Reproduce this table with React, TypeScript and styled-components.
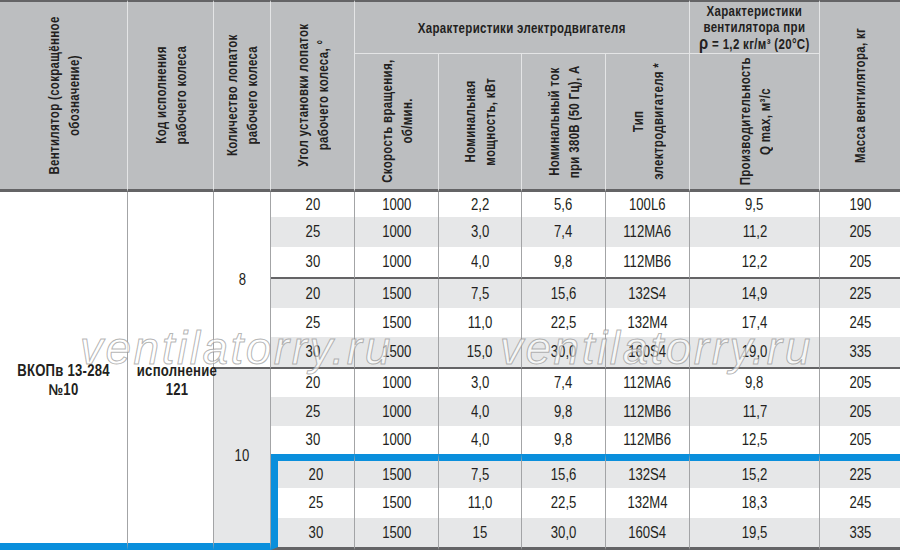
import React from 'react';
import styled, { createGlobalStyle } from 'styled-components';

const GlobalStyle = createGlobalStyle`
  html, body {
    margin: 0;
    padding: 0;
    background: #fff;
  }
`;

// Arial-metric face squeezed to 82% gives the widths of Arial Narrow
const FONT = `"Liberation Sans", Arial, sans-serif`;
const SQUEEZE = 0.82;
const DARK = '#646466';
const BLUE = '#0a8fdc';
const GRID = '#a3a4a6';
const HEAD_LINE = '#e4e5e6';

const Wrap = styled.div`
  position: relative;
  width: 900px;
  height: 550px;
  overflow: hidden;
  font-family: ${FONT};
  color: #231f20;
`;

const Table = styled.table`
  width: 900px;
  table-layout: fixed;
  border-collapse: separate;
  border-spacing: 0;
`;

const HeadCell = styled.th<{ $top?: boolean; $bottom?: 'dark' | 'light'; $last?: boolean }>`
  background: #bcbec0;
  padding: 0;
  font-weight: bold;
  text-align: center;
  vertical-align: middle;
  overflow: hidden;
  border-right: ${p => (p.$last ? 'none' : `1px solid ${HEAD_LINE}`)};
  border-top: ${p => (p.$top ? `2px solid ${DARK}` : 'none')};
  border-bottom: ${p =>
    p.$bottom === 'dark' ? `3px solid ${DARK}` : p.$bottom === 'light' ? `1px solid ${HEAD_LINE}` : 'none'};
`;

const VBox = styled.div<{ $h: number }>`
  height: ${p => p.$h}px;
  display: flex;
  align-items: center;
  justify-content: center;
`;

const VLabel = styled.span`
  flex-shrink: 0;
  writing-mode: vertical-rl;
  transform: rotate(180deg) scaleY(${SQUEEZE});
  font-size: 14px;
  line-height: 20px;
  letter-spacing: 0.4px;
  text-align: center;
  white-space: nowrap;
`;

const GroupBox = styled.div`
  display: flex;
  justify-content: center;
`;

const GroupLabel = styled.span`
  flex-shrink: 0;
  transform: scaleX(${SQUEEZE});
  font-size: 14px;
  line-height: 16px;
  letter-spacing: 0.4px;
  white-space: nowrap;
`;

const Rho = styled.span`
  font-size: 18px;
`;

const BodyRow = styled.tr<{ $h: number }>`
  height: ${p => p.$h}px;
`;

const Cell = styled.td<{
  $gray?: boolean;
  $bottom?: 'dark' | 'blue';
  $blueTop?: boolean;
  $blueLeft?: boolean;
  $last?: boolean;
}>`
  padding: 0;
  text-align: center;
  vertical-align: middle;
  font-size: 16px;
  line-height: 18px;
  white-space: nowrap;
  background: ${p => (p.$gray ? '#e6e7e8' : '#fff')};
  border-right: ${p => (p.$last ? 'none' : `1px solid ${GRID}`)};
  border-left: ${p => (p.$blueLeft ? `7px solid ${BLUE}` : 'none')};
  border-top: ${p => (p.$blueTop ? `7px solid ${BLUE}` : 'none')};
  border-bottom: ${p =>
    p.$bottom === 'dark' ? `2px solid ${DARK}` : p.$bottom === 'blue' ? `7px solid ${BLUE}` : 'none'};
`;

const ModelCell = styled(Cell)`
  font-weight: bold;
  line-height: 19px;
  padding-top: 24px;
  letter-spacing: 0.3px;
`;

const Narrow = styled.span`
  display: inline-block;
  transform: scaleX(${SQUEEZE});
`;

const Watermark = styled.span<{ $left: number }>`
  position: absolute;
  top: 325px;
  left: ${p => p.$left}px;
  font-family: "Liberation Sans", Arial, sans-serif;
  font-style: italic;
  font-size: 46px;
  line-height: 1;
  letter-spacing: 2.5px;
  white-space: nowrap;
  color: rgba(255, 255, 255, 0.65);
  -webkit-text-stroke: 1px rgba(140, 140, 140, 0.65);
  pointer-events: none;
`;

type Row = [string, string, string, string, string, string, string];

const rows: Row[] = [
  ['20', '1000', '2,2', '5,6', '100L6', '9,5', '190'],
  ['25', '1000', '3,0', '7,4', '112MA6', '11,2', '205'],
  ['30', '1000', '4,0', '9,8', '112MB6', '12,2', '205'],
  ['20', '1500', '7,5', '15,6', '132S4', '14,9', '225'],
  ['25', '1500', '11,0', '22,5', '132M4', '17,4', '245'],
  ['30', '1500', '15,0', '30,0', '160S4', '19,0', '335'],
  ['20', '1000', '3,0', '7,4', '112MA6', '9,8', '205'],
  ['25', '1000', '4,0', '9,8', '112MB6', '11,7', '205'],
  ['30', '1000', '4,0', '9,8', '112MB6', '12,5', '205'],
  ['20', '1500', '7,5', '15,6', '132S4', '15,2', '225'],
  ['25', '1500', '11,0', '22,5', '132M4', '18,3', '245'],
  ['30', '1500', '15', '30,0', '160S4', '19,5', '335'],
];

const heights = [25, 30, 32, 29, 29, 32, 28, 29, 28, 34, 30, 32];
const widths = [128, 86, 57, 84, 84, 83, 84, 84, 130, 80];

const FULL = 187;
const SUB = 134;

function App() {
  return (
    <Wrap>
      <GlobalStyle />
      <Table>
        <colgroup>
          {widths.map((w, i) => (
            <col key={i} style={{ width: w }} />
          ))}
        </colgroup>
        <thead>
          <tr style={{ height: 54 }}>
            <HeadCell rowSpan={2} $top $bottom="dark">
              <VBox $h={FULL}>
                <VLabel>Вентилятор (сокращённое<br />обозначение)</VLabel>
              </VBox>
            </HeadCell>
            <HeadCell rowSpan={2} $top $bottom="dark">
              <VBox $h={FULL}>
                <VLabel>Код исполнения<br />рабочего колеса</VLabel>
              </VBox>
            </HeadCell>
            <HeadCell rowSpan={2} $top $bottom="dark">
              <VBox $h={FULL}>
                <VLabel>Количество лопаток<br />рабочего колеса</VLabel>
              </VBox>
            </HeadCell>
            <HeadCell rowSpan={2} $top $bottom="dark">
              <VBox $h={FULL}>
                <VLabel>Угол установки лопаток<br />рабочего колеса, °</VLabel>
              </VBox>
            </HeadCell>
            <HeadCell colSpan={4} $top $bottom="light">
              <GroupBox>
                <GroupLabel>Характеристики электродвигателя</GroupLabel>
              </GroupBox>
            </HeadCell>
            <HeadCell $top $bottom="light">
              <GroupBox>
                <GroupLabel>
                  Характеристики
                  <br />
                  вентилятора при
                  <br />
                  <Rho>ρ</Rho> = 1,2 кг/м³ (20°C)
                </GroupLabel>
              </GroupBox>
            </HeadCell>
            <HeadCell rowSpan={2} $top $bottom="dark" $last>
              <VBox $h={FULL}>
                <VLabel>Масса вентилятора, кг</VLabel>
              </VBox>
            </HeadCell>
          </tr>
          <tr style={{ height: 138 }}>
            <HeadCell $bottom="dark">
              <VBox $h={SUB}>
                <VLabel>Скорость вращения,<br />об/мин.</VLabel>
              </VBox>
            </HeadCell>
            <HeadCell $bottom="dark">
              <VBox $h={SUB}>
                <VLabel>Номинальная<br />мощность, кВт</VLabel>
              </VBox>
            </HeadCell>
            <HeadCell $bottom="dark">
              <VBox $h={SUB}>
                <VLabel>Номинальный ток<br />при 380В (50 Гц), А</VLabel>
              </VBox>
            </HeadCell>
            <HeadCell $bottom="dark">
              <VBox $h={SUB}>
                <VLabel>Тип<br />электродвигателя *</VLabel>
              </VBox>
            </HeadCell>
            <HeadCell $bottom="dark">
              <VBox $h={SUB}>
                <VLabel>Производительность<br />Q max, м³/с</VLabel>
              </VBox>
            </HeadCell>
          </tr>
        </thead>
        <tbody>
          {rows.map((r, i) => {
            const gray = i % 2 === 1;
            const framed = i >= 9;
            const bottom = i === 2 || i === 5 || i === 11 ? 'dark' : undefined;
            return (
              <BodyRow key={i} $h={heights[i]}>
                {i === 0 && (
                  <>
                    <ModelCell rowSpan={12} $bottom="blue">
                      <Narrow>
                        ВКОПв 13-284
                        <br />
                        №10
                      </Narrow>
                    </ModelCell>
                    <ModelCell rowSpan={12} $bottom="blue">
                      <Narrow>
                        исполнение
                        <br />
                        121
                      </Narrow>
                    </ModelCell>
                    <Cell rowSpan={6} $bottom="dark">
                      <Narrow>8</Narrow>
                    </Cell>
                  </>
                )}
                {i === 6 && (
                  <Cell rowSpan={6} $gray $bottom="blue">
                    <Narrow>10</Narrow>
                  </Cell>
                )}
                {r.map((v, j) => (
                  <Cell
                    key={j}
                    $gray={gray}
                    $bottom={bottom as 'dark' | undefined}
                    $blueTop={i === 9}
                    $blueLeft={framed && j === 0}
                    $last={j === r.length - 1}
                    style={i === 11 ? { borderBottomWidth: 3 } : undefined}
                  >
                    <Narrow>{v}</Narrow>
                  </Cell>
                ))}
              </BodyRow>
            );
          })}
        </tbody>
      </Table>
      <Watermark $left={80}>ventilatorry.ru</Watermark>
      <Watermark $left={500}>ventilatorry.ru</Watermark>
    </Wrap>
  );
}

export default App;
